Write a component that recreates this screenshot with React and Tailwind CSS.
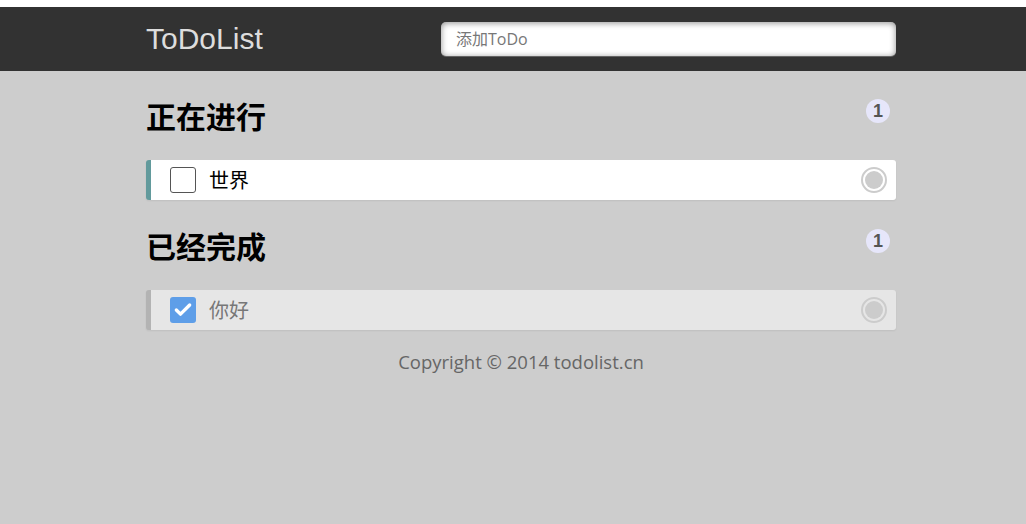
import { Check } from 'lucide-react';

const cjk = "font-['Open_Sans','Noto_Sans_CJK_SC',sans-serif]";

const todos = [{ id: 1, title: '世界', done: false }];
const dones = [{ id: 2, title: '你好', done: true }];

const Badge = ({ count }) => (
  <span className="mr-[6px] flex h-[24px] w-[24px] items-center justify-center rounded-full bg-[#e6e6fa] font-['Liberation_Sans',sans-serif] text-[18px] font-bold text-[#555]">
    {count}
  </span>
);

const Item = ({ item }) => (
  <li
    className={`flex h-[40px] items-center rounded-[3px] border-l-[5px] pl-[19px] pr-[9px] shadow-[0_1px_2px_rgba(0,0,0,0.07)] ${
      item.done ? 'border-[#b3b3b3] bg-[#e6e6e6]' : 'border-[#629a9c] bg-white'
    }`}
  >
    {item.done ? (
      <span className="flex h-[26px] w-[26px] items-center justify-center rounded-[3px] bg-[#5e9ee8]">
        <Check className="h-[20px] w-[20px] text-white" strokeWidth={4} />
      </span>
    ) : (
      <span className="h-[26px] w-[26px] rounded-[3px] border-[1.5px] border-[#555] bg-white" />
    )}
    <span className={`ml-[13px] flex-1 pt-[2px] text-[20px] ${cjk} ${item.done ? 'text-[#777]' : 'text-black'}`}>
      {item.title}
    </span>
    <span className="flex h-[26px] w-[26px] items-center justify-center rounded-full border-[2px] border-[#ccc]">
      <span className="h-[18px] w-[18px] rounded-full bg-[#ccc]" />
    </span>
  </li>
);

const Section = ({ title, items }) => (
  <section>
    <div className="flex items-start justify-between pt-[28px]">
      <h2 className={`text-[30px] font-bold leading-[36px] text-black ${cjk}`}>{title}</h2>
      <Badge count={items.length} />
    </div>
    <ol className="mt-[25px] space-y-2">
      {items.map((item) => (
        <Item key={item.id} item={item} />
      ))}
    </ol>
  </section>
);

export default function App() {
  return (
    <div className="min-h-[524px] bg-[#cdcdcd]">
      <div className="h-[7px] bg-white" />
      {/* Header */}
      <header className="h-[64px] bg-[#323232]">
        <div className="ml-[146px] flex h-full w-[750px] items-center justify-between">
          <h1 className="font-['Liberation_Sans',sans-serif] text-[30px] leading-none text-[#ddd]">ToDoList</h1>
          <input
            type="text"
            placeholder="添加ToDo"
            className={`h-[34px] w-[455px] rounded-[5px] bg-white pl-[15px] text-[16px] text-[#333] outline-none placeholder:text-[#777] shadow-[inset_0_1px_6px_rgba(0,0,0,0.45),0_1px_0_rgba(255,255,255,0.24)] ${cjk}`}
          />
        </div>
      </header>

      <main className="ml-[146px] w-[750px]">
        <Section title="正在进行" items={todos} />
        <div className="pt-[1px]" />
        <Section title="已经完成" items={dones} />
        <footer className={`mt-[20px] text-center text-[18.5px] leading-[24px] text-[#666] ${cjk}`}>
          Copyright © 2014 todolist.cn
        </footer>
      </main>
    </div>
  );
}
